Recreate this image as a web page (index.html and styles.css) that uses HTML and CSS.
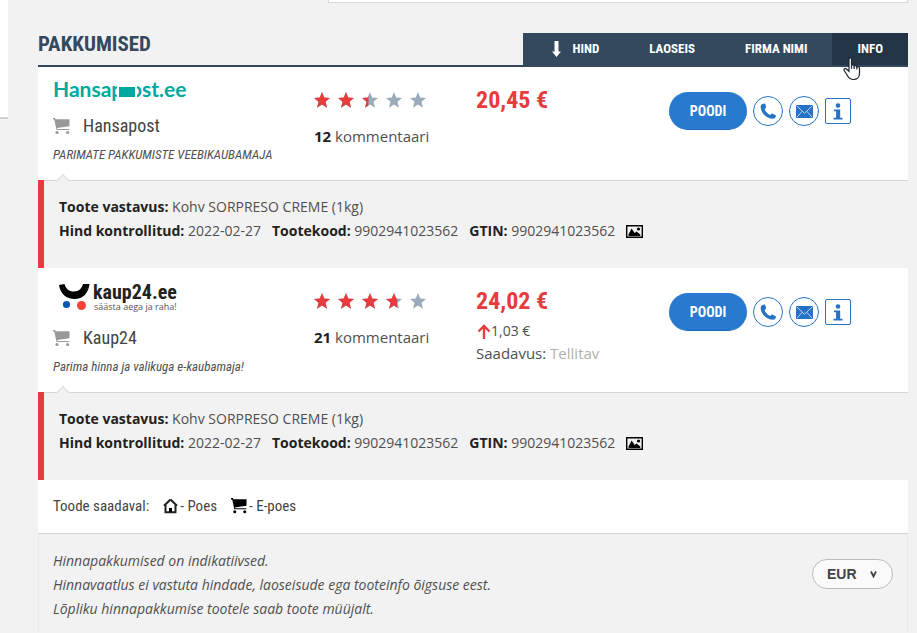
FILE: index.html
```
<!DOCTYPE html>
<html lang="et">
<head>
    <meta charset="UTF-8">
    <meta name="viewport" content="width=device-width, initial-scale=1.0">
    <title>Pakkumised</title>
    <link rel="stylesheet" href="styles.css">
</head>
<body>
    <!-- Shared icons -->
    <svg class="sprite" width="0" height="0" aria-hidden="true">
        <symbol id="icon-cart" viewBox="0 0 17 17">
            <path d="M0 0h2l.6 1.300H16.500v7L4 10l.3 1h12v1H3.500L1.300 1.500H0z"/>
            <circle cx="4" cy="14.500" r="1.600"/>
            <circle cx="14.600" cy="14.500" r="1.600"/>
        </symbol>
        <symbol id="icon-star" viewBox="0 0 16 16">
            <path d="M8 0l2.200 5.600 5.800.4-4.500 3.800L13 15.800 8 12.500 3 15.800l1.500-6L0 6l5.800-.4z"/>
        </symbol>
        <symbol id="icon-phone" viewBox="0 0 18 18">
            <path d="M2.200 1.300L4.400.5c.5-.2.9.1 1.100.6l.9 3c.1.500 0 .8-.4 1.100L4.900 6.500c.9 2.600 3 4.700 5.900 6.100l1.500-1.200c.4-.3.8-.3 1.200-.1l3 1.700c.4.3.5.7.3 1.200l-.8 1.300c-.5.8-1.300 1.200-2.300 1.200C7 16.500.8 10.300.7 4.200c0-1.300.5-2.300 1.500-2.900z"/>
        </symbol>
        <symbol id="icon-mail" viewBox="0 0 17 13">
            <path d="M0 0h17v13H0z"/>
            <path d="M.5.7l8 7.500 8-7.500M.8 12.300l5.400-6M16.200 12.300l-5.400-6" fill="none" stroke="#fff" stroke-width=".7"/>
        </symbol>
        <symbol id="icon-info" viewBox="0 0 10 17">
            <circle cx="5" cy="2.500" r="2.300"/>
            <path d="M1 6.500h6.200v8.300H9.500v1.700h-9v-1.700h2.600V8.300H1z"/>
        </symbol>
        <symbol id="icon-picture" viewBox="0 0 17 13">
            <path d="M.7.700h15.600v11.600H.7z" fill="none" stroke="currentColor" stroke-width="1.400"/>
            <path d="M2.500 11V9.500L5.600 3.500l3 4.500 2-1.600 3.700 3V11z"/>
            <circle cx="12.500" cy="4" r="1.600"/>
        </symbol>
    </svg>

    <div class="page">
        <aside class="side-panel"></aside>
        <main class="content">
            <div class="top-panel"></div>

            <header class="offers-header">
                <h2 class="offers-title">Pakkumised</h2>
                <nav class="sort-nav">
                    <a href="#" class="sort-link sort-active">
                        <svg class="sort-arrow" viewBox="0 0 9 16"><path d="M2.500 0h4v10.500H9L4.500 16 0 10.500h2.500z"/></svg>
                        Hind
                    </a>
                    <a href="#" class="sort-link">Laoseis</a>
                    <a href="#" class="sort-link">Firma nimi</a>
                    <a href="#" class="sort-link sort-hover">Info
                        <svg class="pointer" viewBox="0 0 18 24">
                            <path d="M6 2.200C6 .5 8.500.5 8.500 2.200v6.300c.3-1 2.500-.9 2.700.6.500-.8 2.500-.6 2.700.9.700-.7 2.600-.3 2.600 1.300v5.200c0 3.500-2.500 6-6 6-3 0-4.600-1.200-6-3.700L1.200 13.500c-.9-1.500 1-2.700 2.300-1.500L6 14.300z" fill="#fff" stroke="#1b2330" stroke-width="1.200"/>
                            <path d="M8.500 8.500v3.200M11.200 9.300v2.700M13.900 10.200v2.300" stroke="#1b2330" stroke-width="1.200"/>
                        </svg>
                    </a>
                </nav>
            </header>

            <section class="offer">
                <div class="shop">
                    <a href="#" class="shop-logo">
                        <svg width="140" height="30" viewBox="0 0 140 30" role="img" aria-label="Hansapost.ee">
                            <g class="hansa-text">
                                <text x="0" y="22">Hansap</text>
                                <text x="77" y="22">ost.ee</text>
                            </g>
                            <path d="M64 9h20v14H64z" fill="#fff"/>
                            <path d="M66 12h16v10H66z" fill="#00a99d"/>
                        </svg>
                    </a>
                    <div class="shop-name"><svg class="cart-icon"><use href="#icon-cart"/></svg><a href="#">Hansapost</a></div>
                    <p class="slogan">PARIMATE PAKKUMISTE VEEBIKAUBAMAJA</p>
                </div>
                <div class="rating">
                    <div class="stars" data-rating="2.4"></div>
                    <a href="#" class="comments"><b>12</b> kommentaari</a>
                </div>
                <div class="price-box">
                    <div class="price">20,45 €</div>
                </div>
                <div class="actions">
                    <button class="shop-button">Poodi</button>
                    <button class="round-button" aria-label="Telefon"><svg width="17" height="17"><use href="#icon-phone"/></svg></button>
                    <button class="round-button" aria-label="E-post"><svg width="17" height="13"><use href="#icon-mail"/></svg></button>
                    <button class="info-button" aria-label="Info"><svg width="10" height="17"><use href="#icon-info"/></svg></button>
                </div>
            </section>
            <div class="details">
                <div><b>Toote vastavus:</b> Kohv SORPRESO CREME (1kg)</div>
                <div class="codes">
                    <span><b>Hind kontrollitud:</b> 2022-02-27</span>
                    <span><b>Tootekood:</b> 9902941023562</span>
                    <span><b>GTIN:</b> 9902941023562</span>
                    <svg class="picture-icon"><use href="#icon-picture"/></svg>
                </div>
            </div>

            <section class="offer">
                <div class="shop">
                    <a href="#" class="shop-logo kaup-logo">
                        <svg width="140" height="40" viewBox="0 0 140 40" role="img" aria-label="kaup24.ee">
                            <path d="M6 9l5.500-1c1.500 5 4.500 7.500 9.500 7.500s7.800-3 9-7.500h6.500c-1 9-6.500 15-15 15C13.500 23 7.500 18 6 9z" fill="#000"/>
                            <circle cx="13.500" cy="28.500" r="3.600" fill="#0a57b0"/>
                            <circle cx="28.500" cy="29.500" r="4.500" fill="#f44336"/>
                            <text x="40" y="23" class="kaup-name">kaup24.ee</text>
                            <text x="41" y="34" class="kaup-tag">säästa aega ja raha!</text>
                        </svg>
                    </a>
                    <div class="shop-name"><svg class="cart-icon"><use href="#icon-cart"/></svg><a href="#">Kaup24</a></div>
                    <p class="slogan">Parima hinna ja valikuga e-kaubamaja!</p>
                </div>
                <div class="rating">
                    <div class="stars" data-rating="3.7"></div>
                    <a href="#" class="comments"><b>21</b> kommentaari</a>
                </div>
                <div class="price-box">
                    <div class="price">24,02 €</div>
                    <div class="price-change">
                        <svg width="14" height="15" viewBox="0 0 14 15"><path d="M7 15V2M1.500 7.500L7 2l5.500 5.500" fill="none" stroke="#e83b3d" stroke-width="2.400"/></svg>1,03 €
                    </div>
                    <div class="stock">Saadavus: <span>Tellitav</span></div>
                </div>
                <div class="actions">
                    <button class="shop-button">Poodi</button>
                    <button class="round-button" aria-label="Telefon"><svg width="17" height="17"><use href="#icon-phone"/></svg></button>
                    <button class="round-button" aria-label="E-post"><svg width="17" height="13"><use href="#icon-mail"/></svg></button>
                    <button class="info-button" aria-label="Info"><svg width="10" height="17"><use href="#icon-info"/></svg></button>
                </div>
            </section>
            <div class="details">
                <div><b>Toote vastavus:</b> Kohv SORPRESO CREME (1kg)</div>
                <div class="codes">
                    <span><b>Hind kontrollitud:</b> 2022-02-27</span>
                    <span><b>Tootekood:</b> 9902941023562</span>
                    <span><b>GTIN:</b> 9902941023562</span>
                    <svg class="picture-icon"><use href="#icon-picture"/></svg>
                </div>
            </div>

            <div class="legend">
                <span>Toode saadaval:</span>
                <span class="legend-item">
                    <svg width="15" height="16" viewBox="0 0 15 16"><path d="M7.500 1.500L1 7.800M7.500 1.500L14 7.800M2.500 6.500v7.700h10V6.500" fill="none" stroke="#222" stroke-width="2"/><path d="M6 10h3v4H6z"/></svg>
                    - Poes
                </span>
                <span class="legend-item">
                    <svg width="16" height="16"><use href="#icon-cart"/></svg>
                    - E-poes
                </span>
            </div>

            <footer class="offers-footer">
                <p class="disclaimer">
                    Hinnapakkumised on indikatiivsed.<br>
                    Hinnavaatlus ei vastuta hindade, laoseisude ega tooteinfo õigsuse eest.<br>
                    Lõpliku hinnapakkumise tootele saab toote müüjalt.
                </p>
                <div class="currency">
                    <select aria-label="Valuuta">
                        <option>EUR</option>
                        <option>USD</option>
                    </select>
                    <svg class="currency-arrow" viewBox="0 0 7 7"><path d="M1 .5l2.500 5 2.500-5" fill="none" stroke="#444" stroke-width="1.800"/></svg>
                </div>
            </footer>
        </main>
    </div>

    <script>
        // Fill the star ratings
        document.querySelectorAll('.stars').forEach(stars => {
            const rating = Number(stars.dataset.rating);

            for (let i = 0; i < 5; i++) {
                const fill = Math.max(0, Math.min(1, rating - i)) * 16;
                stars.innerHTML += `<svg class="star">
                    <use href="#icon-star" width="16" height="16"/>
                    <svg class="star-fill" width="${fill}" height="16"><use href="#icon-star" width="16" height="16"/></svg>
                </svg>`;
            }
        });
    </script>
</body>
</html>
```
FILE: styles.css
```
* {
    box-sizing: border-box;
}

body {
    margin: 0;
    background-color: #f2f2f2;
    font-family: "Open Sans", sans-serif;
    font-size: 14px;
    font-weight: 400;
    line-height: 24px;
    color: #505050;
}

a {
    color: inherit;
    text-decoration: none;
}

p, h2 {
    margin: 0;
}

svg {
    flex: none;
}

b {
    font-weight: 700;
    color: #222;
}

button {
    padding: 0;
    cursor: pointer;
}

.sprite {
    display: none;
}

.page {
    display: flex;
    align-items: flex-start;
    gap: 30px;
    padding-right: 9px;
}

.side-panel {
    width: 8px;
    height: 119px;
    background-color: #fff;
    border-bottom: 2px solid #d0d0d0;
}

.content {
    flex: 1;
}

.top-panel {
    height: 3px;
    margin: 0 0 30px 290px;
    background-color: #fff;
    border: 1px solid #d8d8d8;
    border-top: none;
}

/* Header */
.offers-header {
    display: flex;
    justify-content: space-between;
    border-bottom: 2px solid #34495e;
}

.offers-title {
    font-family: "Roboto Condensed", "Liberation Sans Narrow", sans-serif;
    font-size: 21px;
    font-weight: 700;
    line-height: 22px;
    color: #34495e;
    text-transform: uppercase;
}

.sort-nav {
    display: flex;
    background-color: #34495e;
}

.sort-link {
    position: relative;
    display: flex;
    align-items: center;
    gap: 11px;
    height: 32px;
    padding: 0 25px;
    font-family: "Roboto Condensed", "Liberation Sans Narrow", sans-serif;
    font-size: 13px;
    font-weight: 700;
    color: #fff;
    text-transform: uppercase;
}

.sort-active {
    padding-left: 29px;
}

.sort-arrow {
    width: 9px;
    height: 16px;
    fill: #fff;
}

.sort-hover {
    background-color: #243447;
}

.pointer {
    position: absolute;
    left: 11px;
    top: 24px;
    width: 18px;
    height: 24px;
}

/* Offers */
.offer {
    display: grid;
    grid-template-columns: 261fr 162fr 193fr 239fr;
    padding: 8px 0 13px 15px;
    background-color: #fff;
    border-bottom: 1px solid #d4d4d4;
}

.shop-logo {
    display: block;
    height: 29px;
}

.kaup-logo {
    height: 40px;
}

.hansa-text {
    font-family: Lato, sans-serif;
    font-size: 21px;
    font-weight: 700;
    fill: #00a99d;
}

.kaup-name {
    font-family: "Roboto Condensed", "Liberation Sans Narrow", sans-serif;
    font-size: 20px;
    font-weight: 700;
    fill: #222;
}

.kaup-tag {
    font-family: "Open Sans", sans-serif;
    font-size: 9px;
    font-weight: 400;
    fill: #555;
}

.shop-name {
    display: flex;
    align-items: center;
    gap: 13px;
    margin-top: 10px;
    font-family: "Roboto Condensed", "Liberation Sans Narrow", sans-serif;
    font-size: 18px;
    font-weight: 400;
    color: #444;
}

.cart-icon {
    width: 17px;
    height: 17px;
    fill: #999;
}

.slogan {
    margin-top: 5px;
    font-family: "Roboto Condensed", "Liberation Sans Narrow", sans-serif;
    font-size: 13px;
    font-weight: 400;
    font-style: italic;
}

.stars {
    display: flex;
    gap: 8px;
    margin-top: 17px;
}

.star {
    width: 16px;
    height: 16px;
    fill: #9aaaba;
}

.star-fill {
    fill: #e83b3d;
}

.comments {
    display: block;
    margin-top: 16px;
    font-size: 15px;
}

.price {
    margin-top: 13px;
    font-family: "Roboto Condensed", "Liberation Sans Narrow", sans-serif;
    font-size: 24px;
    font-weight: 700;
    color: #e83b3d;
}

.price-change {
    display: flex;
    align-items: center;
    margin: 7px 0 0 1px;
    line-height: 22px;
}

.stock {
    font-size: 15px;
    line-height: 22px;
}

.stock span {
    color: #b0b0b0;
}

.actions {
    display: flex;
    align-items: center;
    align-self: start;
    gap: 6px;
    margin-top: 17px;
}

.shop-button {
    width: 78px;
    height: 38px;
    background-color: #287ad0;
    border: none;
    border-bottom: 1px solid #1d66b5;
    border-radius: 19px;
    font-family: "Roboto Condensed", "Liberation Sans Narrow", sans-serif;
    font-size: 14px;
    font-weight: 700;
    color: #fff;
    text-transform: uppercase;
}

.round-button,
.info-button {
    display: flex;
    align-items: center;
    justify-content: center;
    width: 30px;
    height: 30px;
    background-color: #fff;
    border: 1px solid #2672c4;
    border-radius: 50%;
    fill: #2672c4;
}

.info-button {
    width: 26px;
    height: 26px;
    border-radius: 2px;
}

/* Product details */
.details {
    position: relative;
    min-height: 88px;
    margin-top: -1px;
    padding: 15px 15px 25px;
    border-left: 6px solid #e83b3d;
}

.details::before {
    content: "";
    position: absolute;
    left: 14px;
    top: -4px;
    width: 9px;
    height: 9px;
    background-color: #f2f2f2;
    border: 1px solid #ddd;
    border-right: none;
    border-bottom: none;
    transform: rotate(45deg);
}

.codes {
    display: flex;
    align-items: center;
    flex-wrap: wrap;
    gap: 0 11px;
}

.picture-icon {
    width: 17px;
    height: 13px;
    color: #000;
}

.legend {
    display: flex;
    gap: 14px;
    padding: 14px 15px 15px;
    background-color: #fff;
    border-bottom: 1px solid #d4d4d4;
    font-family: "Roboto Condensed", "Liberation Sans Narrow", sans-serif;
    font-size: 15px;
    font-weight: 400;
    color: #444;
}

.legend-item {
    display: flex;
    align-items: center;
    gap: 2px;
}

/* Footer */
.offers-footer {
    display: flex;
    justify-content: space-between;
    align-items: flex-start;
    padding: 15px 14px 11px;
    border: 1px solid #eaeaea;
    border-top: none;
    border-bottom: none;
}

.disclaimer {
    font-style: italic;
}

.currency {
    position: relative;
    margin-top: 10px;
}

.currency select {
    appearance: none;
    width: 81px;
    height: 30px;
    padding: 0 30px 0 14px;
    background-color: #fafafa;
    border: 1px solid #bbb;
    border-radius: 15px;
    font-family: "Liberation Sans", sans-serif;
    font-size: 14px;
    font-weight: 700;
    color: #444;
}

.currency-arrow {
    position: absolute;
    right: 16px;
    top: 12px;
    width: 7px;
    height: 7px;
    pointer-events: none;
}
```
